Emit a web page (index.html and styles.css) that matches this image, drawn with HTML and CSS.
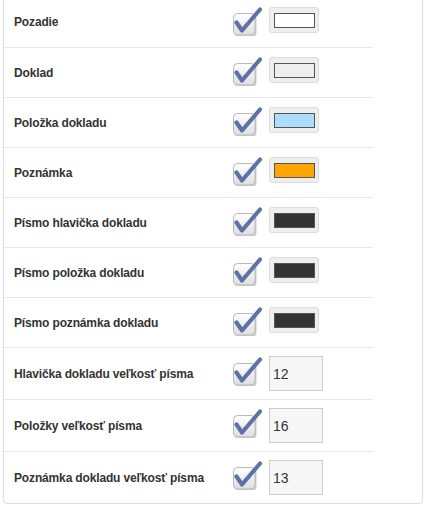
FILE: index.html
```html
<!DOCTYPE html>
<html>
<head>
<meta charset="utf-8">
<link rel="stylesheet" href="styles.css">
</head>
<body>
<svg width="0" height="0" class="defs">
  <defs>
    <linearGradient id="boxg" x1="0" y1="0" x2="0" y2="1">
      <stop offset="0" stop-color="#ffffff"/>
      <stop offset="1" stop-color="#dedede"/>
    </linearGradient>
    <symbol id="chk" viewBox="0 0 32 30">
      <rect x="4.5" y="8.5" width="22" height="22" rx="4" fill="#9a9a9a" opacity="0.5"/>
      <rect x="3.5" y="7.5" width="21.5" height="21.5" rx="4" fill="url(#boxg)" stroke="#b8b8b8" stroke-width="1"/>
      <path d="M6.5 16.5 L12 24.5 L30 3.5" fill="none" stroke="#5d73a8" stroke-width="4.2" stroke-linecap="round" stroke-linejoin="round"/>
    </symbol>
  </defs>
</svg>
<div class="panel">
  <div class="row">
    <div class="label">Pozadie</div>
    <div class="ctrl"><svg class="chk"><use href="#chk"/></svg><span class="btn"><span class="sw sw-white"></span></span></div>
  </div>
  <div class="row">
    <div class="label">Doklad</div>
    <div class="ctrl"><svg class="chk"><use href="#chk"/></svg><span class="btn"><span class="sw sw-grey"></span></span></div>
  </div>
  <div class="row">
    <div class="label">Položka dokladu</div>
    <div class="ctrl"><svg class="chk"><use href="#chk"/></svg><span class="btn"><span class="sw sw-blue"></span></span></div>
  </div>
  <div class="row">
    <div class="label">Poznámka</div>
    <div class="ctrl"><svg class="chk"><use href="#chk"/></svg><span class="btn"><span class="sw sw-orange"></span></span></div>
  </div>
  <div class="row">
    <div class="label">Písmo hlavička dokladu</div>
    <div class="ctrl"><svg class="chk"><use href="#chk"/></svg><span class="btn"><span class="sw sw-dark"></span></span></div>
  </div>
  <div class="row">
    <div class="label">Písmo položka dokladu</div>
    <div class="ctrl"><svg class="chk"><use href="#chk"/></svg><span class="btn"><span class="sw sw-dark"></span></span></div>
  </div>
  <div class="row">
    <div class="label">Písmo poznámka dokladu</div>
    <div class="ctrl"><svg class="chk"><use href="#chk"/></svg><span class="btn"><span class="sw sw-dark"></span></span></div>
  </div>
  <div class="row row-tall">
    <div class="label">Hlavička dokladu veľkosť písma</div>
    <div class="ctrl"><svg class="chk"><use href="#chk"/></svg><span class="num">12</span></div>
  </div>
  <div class="row row-tall">
    <div class="label">Položky veľkosť písma</div>
    <div class="ctrl"><svg class="chk"><use href="#chk"/></svg><span class="num">16</span></div>
  </div>
  <div class="row row-tall">
    <div class="label">Poznámka dokladu veľkosť písma</div>
    <div class="ctrl"><svg class="chk"><use href="#chk"/></svg><span class="num">13</span></div>
  </div>
</div>
</body>
</html>
```

FILE: styles.css
```css
html, body {
  margin: 0;
  padding: 0;
  background: #ffffff;
}
body {
  font-family: "Liberation Sans", Arial, sans-serif;
  color: #333333;
}
.defs {
  position: absolute;
  width: 0;
  height: 0;
}
.panel {
  margin: -4px 0 0 3px;
  width: 420px;
  box-sizing: border-box;
  border: 1px solid #dddddd;
  border-radius: 4px;
  background: #ffffff;
}
.row {
  width: 369px;
  height: 50px;
  box-sizing: border-box;
  border-top: 1px solid #e8e8e8;
  display: flex;
}
.row:first-child {
  border-top: none;
}
.row-tall {
  height: 52px;
}
.label {
  width: 220px;
  box-sizing: border-box;
  padding-left: 10px;
  display: flex;
  align-items: center;
  font-size: 12px;
  font-weight: bold;
  letter-spacing: -0.15px;
  color: #333333;
}
.ctrl {
  display: flex;
  align-items: flex-start;
  padding-left: 6px;
  padding-top: 9px;
}
.row + .row .ctrl {
  padding-top: 8px;
}
.chk {
  width: 32px;
  height: 30px;
  flex: none;
}
.btn {
  margin-left: 7px;
  margin-top: 1px;
  width: 50px;
  height: 26px;
  box-sizing: border-box;
  border: 1px solid #dcdcdc;
  border-radius: 3px;
  background: #eeeeee;
  display: flex;
  align-items: center;
  padding-left: 4px;
}
.sw {
  display: block;
  width: 41px;
  height: 15px;
  box-sizing: border-box;
  border: 1px solid #555555;
}
.sw-white { background: #ffffff; }
.sw-grey { background: #eeeeee; }
.sw-blue { background: #aaddff; }
.sw-orange { background: #ffa500; }
.sw-dark { background: #333333; }
.num {
  margin-left: 7px;
  width: 54px;
  height: 35px;
  box-sizing: border-box;
  border: 1px solid #cccccc;
  background: #f7f7f7;
  font-size: 14px;
  color: #333333;
  display: flex;
  align-items: center;
  padding-left: 3px;
}
```
